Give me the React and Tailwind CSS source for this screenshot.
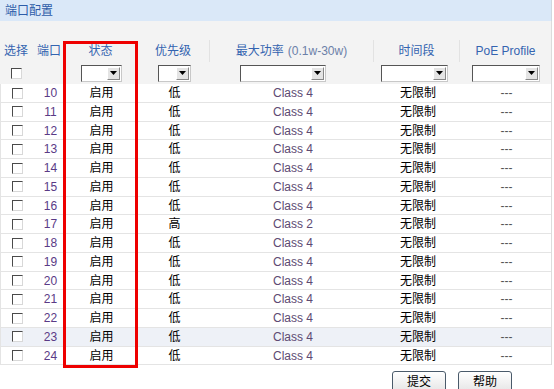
import React from 'react';

const ports = [
  { id: 10, prio: '低', cls: 'Class 4' },
  { id: 11, prio: '低', cls: 'Class 4' },
  { id: 12, prio: '低', cls: 'Class 4' },
  { id: 13, prio: '低', cls: 'Class 4' },
  { id: 14, prio: '低', cls: 'Class 4' },
  { id: 15, prio: '低', cls: 'Class 4' },
  { id: 16, prio: '低', cls: 'Class 4' },
  { id: 17, prio: '高', cls: 'Class 2' },
  { id: 18, prio: '低', cls: 'Class 4' },
  { id: 19, prio: '低', cls: 'Class 4' },
  { id: 20, prio: '低', cls: 'Class 4' },
  { id: 21, prio: '低', cls: 'Class 4' },
  { id: 22, prio: '低', cls: 'Class 4' },
  { id: 23, prio: '低', cls: 'Class 4', hover: true },
  { id: 24, prio: '低', cls: 'Class 4' },
];

const cols = 'grid grid-cols-[32px_32px_73px_73px_164px_86px_91px]';

const Checkbox = () => (
  <span className="block w-[11px] h-[11px] bg-white border border-t-[#4a4a4a] border-l-[#4a4a4a] border-r-[#d8d8d8] border-b-[#d8d8d8]" />
);

const Select = ({ width }) => (
  <div
    className="flex h-[17px] bg-white border border-t-[#555] border-l-[#555] border-r-[#c8c8c8] border-b-[#c8c8c8]"
    style={{ width }}
  >
    <div className="flex-1" />
    <div className="w-[13px] my-[1px] mr-[1px] bg-[#e4e4e4] border border-t-[#fff] border-l-[#fff] border-r-[#888] border-b-[#888] flex items-center justify-center">
      <svg width="7" height="4" viewBox="0 0 7 4">
        <path d="M0 0h7L3.5 4z" fill="#000" />
      </svg>
    </div>
  </div>
);

const Button = ({ children }) => (
  <button className="w-[54px] h-[21px] rounded-[3px] border border-[#4a5a6a] bg-gradient-to-b from-white to-[#e6e6e6] text-[12px] text-black leading-none">
    {children}
  </button>
);

export default function App() {
  return (
    <div
      className="relative w-[554px] h-[389px] overflow-hidden bg-white text-[12px]"
      style={{ fontFamily: '"Liberation Sans", "Noto Sans CJK SC", sans-serif' }}
    >
      {/* Title bar */}
      <div className="h-[21px] bg-[#dae8f8] pl-[5px] flex items-center text-[#2d5ca8] border-r border-[#d0d8e0] w-[552px]">
        端口配置
      </div>

      <div className="w-[552px] border-r border-[#dcdcdc]">
        {/* Header */}
        <div className="bg-[#f3f3f3] pt-[19px]">
          <div className={`${cols} h-[22px] items-center text-[#3464b0]`}>
            <div className="text-center">选择</div>
            <div className="text-center pr-[2px] pl-[4px]">端口</div>
            <div className="text-center">状态</div>
            <div className="text-center border-r border-[#e2e2e2] h-full flex items-center justify-center">优先级</div>
            <div className="text-center border-r border-[#e2e2e2] h-full flex items-center justify-center">
              最大功率 <span className="ml-[4px] text-[#6b80a8]">(0.1w-30w)</span>
            </div>
            <div className="text-center border-r border-[#e2e2e2] h-full flex items-center justify-center">时间段</div>
            <div className="text-center h-full flex items-center justify-center">PoE Profile</div>
          </div>
          <div className={`${cols} h-[22px] items-center`}>
            <div className="flex justify-center pl-[1px]"><Checkbox /></div>
            <div />
            <div className="flex justify-center pl-[2px]"><Select width={41} /></div>
            <div className="flex justify-start pl-[21px]"><Select width={33} /></div>
            <div className="flex justify-start pl-[30px]"><Select width={86} /></div>
            <div className="flex justify-start pl-[7px]"><Select width={67} /></div>
            <div className="flex justify-start pl-[12px]"><Select width={68} /></div>
          </div>
        </div>

        {/* Rows */}
        <div className="border-l border-[#e4e4e4]">
          {ports.map((p) => (
            <div
              key={p.id}
              className={`${cols} h-[18.75px] border-b border-[#e4e4e4] ${p.hover ? 'bg-[#eef1f7]' : 'bg-white'}`}
            >
              <div className="flex items-center justify-center"><Checkbox /></div>
              <div className="flex items-center justify-center pl-[3px] text-[#5a3a86]">{p.id}</div>
              <div className="flex items-center justify-center text-black">启用</div>
              <div className="flex items-center justify-center text-black">{p.prio}</div>
              <div className="flex items-center justify-center text-[#5d4a72]">{p.cls}</div>
              <div className="flex items-center justify-center text-black">无限制</div>
              <div className="flex items-center justify-center text-[#555]">---</div>
            </div>
          ))}
        </div>
      </div>

      {/* Buttons */}
      <div className="flex gap-[12px] pl-[392px] pt-[6px]">
        <Button>提交</Button>
        <Button>帮助</Button>
      </div>

      {/* Annotation box */}
      <div className="absolute left-[63px] top-[41px] w-[75px] h-[327px] border-[3px] border-[#ee0000]" />
    </div>
  );
}
